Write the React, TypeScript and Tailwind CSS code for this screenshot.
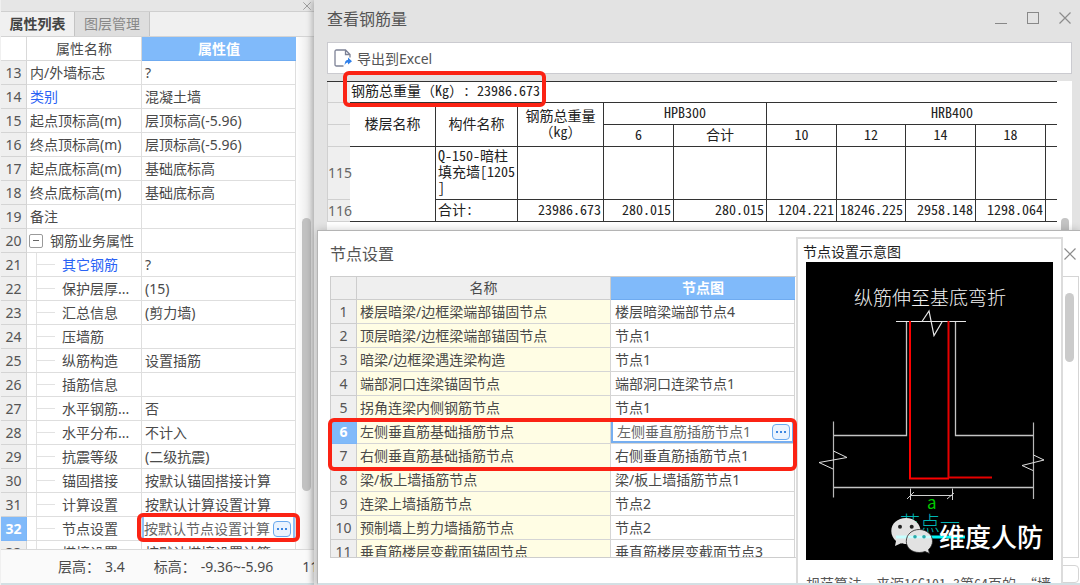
import type { ReactNode } from "react";

const UI = "font-['Noto_Sans','Noto_Sans_CJK_SC',sans-serif]";
const MONO = "font-['Noto_Sans_Mono_CJK_SC','Liberation_Serif','Noto_Sans_CJK_SC',monospace]";

type Property = {
  id: number;
  name: string;
  value?: string;
  kind?: "link" | "group";
  child?: boolean;
};

const properties: Property[] = [
  { id: 13, name: "内/外墙标志", value: "?" },
  { id: 14, name: "类别", value: "混凝土墙", kind: "link" },
  { id: 15, name: "起点顶标高(m)", value: "层顶标高(-5.96)" },
  { id: 16, name: "终点顶标高(m)", value: "层顶标高(-5.96)" },
  { id: 17, name: "起点底标高(m)", value: "基础底标高" },
  { id: 18, name: "终点底标高(m)", value: "基础底标高" },
  { id: 19, name: "备注" },
  { id: 20, name: "钢筋业务属性", kind: "group" },
  { id: 21, name: "其它钢筋", value: "?", kind: "link", child: true },
  { id: 22, name: "保护层厚...", value: "(15)", child: true },
  { id: 23, name: "汇总信息", value: "(剪力墙)", child: true },
  { id: 24, name: "压墙筋", child: true },
  { id: 25, name: "纵筋构造", value: "设置插筋", child: true },
  { id: 26, name: "插筋信息", child: true },
  { id: 27, name: "水平钢筋...", value: "否", child: true },
  { id: 28, name: "水平分布...", value: "不计入", child: true },
  { id: 29, name: "抗震等级", value: "(二级抗震)", child: true },
  { id: 30, name: "锚固搭接", value: "按默认锚固搭接计算", child: true },
  { id: 31, name: "计算设置", value: "按默认计算设置计算", child: true },
  { id: 32, name: "节点设置", value: "按默认节点设置计算", child: true },
  { id: 33, name: "搭接设置", value: "按默认搭接设置计算", child: true },
];

const nodes: [string, string][] = [
  ["楼层暗梁/边框梁端部锚固节点", "楼层暗梁端部节点4"],
  ["顶层暗梁/边框梁端部锚固节点", "节点1"],
  ["暗梁/边框梁遇连梁构造", "节点1"],
  ["端部洞口连梁锚固节点", "端部洞口连梁节点1"],
  ["拐角连梁内侧钢筋节点", "节点1"],
  ["左侧垂直筋基础插筋节点", "左侧垂直筋插筋节点1"],
  ["右侧垂直筋基础插筋节点", "右侧垂直筋插筋节点1"],
  ["梁/板上墙插筋节点", "梁/板上墙插筋节点1"],
  ["连梁上墙插筋节点", "节点2"],
  ["预制墙上剪力墙插筋节点", "节点2"],
  ["垂直筋楼层变截面锚固节点", "垂直筋楼层变截面节点3"],
];

function Highlight({ className }: { className: string }) {
  return (
    <span
      aria-hidden="true"
      className={`pointer-events-none absolute z-10 rounded-md border-4 border-[#fb2314] ${className}`}
    />
  );
}

function MoreButton({ label }: { label: string }) {
  return (
    <button
      type="button"
      aria-label={label}
      className="flex h-4 w-[18px] shrink-0 items-center justify-center gap-0.5 rounded-sm border border-[#6aa9ee] bg-[#eaf3fe]"
    >
      <i className="size-0.5 bg-[#3c86e0]" />
      <i className="size-0.5 bg-[#3c86e0]" />
      <i className="size-0.5 bg-[#3c86e0]" />
    </button>
  );
}

function Cross({ size }: { size: number }) {
  return (
    <svg width={size} height={size} viewBox="0 0 12 12" fill="none" stroke="#8c8c8c" strokeWidth="1.2">
      <path d="M0.5 0.5 11.5 11.5M11.5 0.5 0.5 11.5" />
    </svg>
  );
}

function PropertyRow({ row }: { row: Property }) {
  const selected = row.id === 32;
  return (
    <tr className="h-6">
      <th
        scope="row"
        className={
          selected
            ? "border-r border-b border-[#7cb5f7] bg-[#80bafa] p-0 text-center font-bold text-white"
            : "border-r border-b border-[#d4d4d4] bg-[#efefef] p-0 text-center font-normal text-[#555]"
        }
      >
        {row.id}
      </th>
      <td className="border-r border-b border-[#dedede] p-0">
        {row.kind === "group" ? (
          <div className="flex items-center gap-[7px] pl-0.5">
            <button
              type="button"
              aria-label="折叠钢筋业务属性"
              className="flex size-[14px] items-center justify-center rounded-xs border border-[#9a9a9a] bg-white"
            >
              <i className="h-px w-1.5 bg-[#666]" />
            </button>
            <span>{row.name}</span>
          </div>
        ) : row.child ? (
          <div className="flex h-[23px] items-center pl-[9px]">
            <i className="h-[23px] w-px bg-[#e2e2e2]" />
            <i className="mr-[7px] h-px w-[18px] bg-[#e2e2e2]" />
            <span className={row.kind === "link" ? "text-[#2a62f5]" : ""}>{row.name}</span>
          </div>
        ) : (
          <span className={row.kind === "link" ? "pl-[3px] text-[#2a62f5]" : "pl-[3px]"}>{row.name}</span>
        )}
      </td>
      <td className="relative border-r border-b border-[#dedede] p-0">
        {selected ? (
          <div className="flex h-[23px] items-center border-x-2 border-[#8fc0f7] pr-0.5">
            <input
              aria-label="节点设置"
              defaultValue={row.value}
              className="min-w-0 flex-1 bg-transparent text-[#666] outline-none"
            />
            <MoreButton label="编辑节点设置" />
            <Highlight className="-inset-x-[5px] -top-1 -bottom-0.5" />
          </div>
        ) : (
          <span className="pl-[3px]">{row.value}</span>
        )}
      </td>
    </tr>
  );
}

function PropertyPanel() {
  return (
    <aside className="flex w-[314px] shrink-0 flex-col bg-[#f0f0f0] pl-px">
      <div className="flex h-3 shrink-0 items-center justify-end border-b border-[#cfcfcf] bg-[#e6e6e6] pr-[3px]">
        <button type="button" aria-label="关闭面板">
          <Cross size={8} />
        </button>
      </div>
      <div role="tablist" className="flex h-[25px] shrink-0 border-b border-[#d4d4d4]">
        <button
          type="button"
          role="tab"
          aria-selected="true"
          className="w-[74px] border-r border-[#c4c4c4] bg-[#f0f0f0] font-bold text-[#444]"
        >
          属性列表
        </button>
        <button
          type="button"
          role="tab"
          aria-selected="false"
          className="w-[75px] border-r border-[#c4c4c4] bg-[#dedede] text-[#888]"
        >
          图层管理
        </button>
      </div>
      <div className="flex min-h-0 flex-1 overflow-hidden bg-white">
        <div className="w-[295px]">
          <table className="w-full table-fixed border-separate border-spacing-0">
            <colgroup>
              <col className="w-[26px]" />
              <col className="w-[115px]" />
              <col />
            </colgroup>
            <thead>
              <tr className="h-6">
                <th className="border-r border-b border-[#d9d9d9] p-0" />
                <th className="border-r border-b border-[#d9d9d9] p-0 text-center font-normal">属性名称</th>
                <th className="border-b border-[#6fabf0] bg-[#80bafa] p-0 text-center font-bold text-white">
                  属性值
                </th>
              </tr>
            </thead>
            <tbody>
              {properties.map((row) => (
                <PropertyRow key={row.id} row={row} />
              ))}
            </tbody>
          </table>
        </div>
        <div className="flex-1 bg-linear-to-r from-white to-[#e4e4e4] pl-1.5">
          <div className="mt-[181px] h-[273px] w-[9px] rounded-full bg-[#c1c1c1]" />
        </div>
      </div>
      <footer className="flex h-9 shrink-0 items-center gap-[29px] overflow-hidden border-t border-b-2 border-t-[#d9d9d9] border-b-[#d3e0e4] bg-[#fafafa] pl-[57px] whitespace-nowrap">
        <span className="flex gap-[5px]">
          <span>层高：</span>
          <span>3.4</span>
        </span>
        <span className="flex gap-[5px]">
          <span>标高：</span>
          <span>-9.36~-5.96</span>
        </span>
        <span>11</span>
      </footer>
    </aside>
  );
}

function Gutter({ children }: { children?: ReactNode }) {
  return (
    <th
      scope="row"
      className={`border-b border-l border-[#d0d0d0] bg-[#efefef] p-0 text-center font-normal text-[#666] ${UI}`}
    >
      {children}
    </th>
  );
}

const cell = "border-r border-b border-[#333] p-0 pb-1";
const edge = "border-b border-[#333] p-0";

function RebarTable() {
  return (
    <table
      className={`w-[730px] table-fixed border-separate border-spacing-0 border-t border-[#333] leading-4 text-[#222] ${MONO}`}
    >
      <colgroup>
        <col className="w-[23px]" />
        <col className="w-[86px]" />
        <col className="w-[82px]" />
        <col className="w-[86px]" />
        <col className="w-[70px]" />
        <col className="w-[93px]" />
        <col className="w-[70px]" />
        <col className="w-[69px]" />
        <col className="w-[70px]" />
        <col className="w-[70px]" />
        <col />
      </colgroup>
      <tbody>
        <tr className="h-[21px]">
          <Gutter />
          <td colSpan={10} className="border-b border-[#333] p-0 pb-1 pl-px">
            钢筋总重量（Kg）: 23986.673
          </td>
        </tr>
        <tr className="h-[22px] text-center">
          <Gutter />
          <td rowSpan={2} className={cell}>楼层名称</td>
          <td rowSpan={2} className={cell}>构件名称</td>
          <td rowSpan={2} className={cell}>钢筋总重量<br />（kg）</td>
          <td colSpan={2} className={cell}>HPB300</td>
          <td colSpan={5} className="border-b border-[#333] p-0 pb-1 pl-20">HRB400</td>
        </tr>
        <tr className="h-[22px] text-center">
          <Gutter />
          <td className={cell}>6</td>
          <td className={cell}>合计</td>
          <td className={cell}>10</td>
          <td className={cell}>12</td>
          <td className={cell}>14</td>
          <td className={cell}>18</td>
          <td className={edge} />
        </tr>
        <tr className="h-[53px]">
          <Gutter>115</Gutter>
          <td rowSpan={2} className={cell} />
          <td className={cell}>
            <div className="pl-0.5">Q-150-暗柱<br />填充墙[1205<br />]</div>
          </td>
          <td className={cell} />
          <td className={cell} />
          <td className={cell} />
          <td className={cell} />
          <td className={cell} />
          <td className={cell} />
          <td className={cell} />
          <td className={edge} />
        </tr>
        <tr className="h-[22px] text-right">
          <Gutter>116</Gutter>
          <td className={`${cell} text-left`}>
            <div className="pl-0.5">合计:</div>
          </td>
          <td className={cell}><div className="pr-0.5">23986.673</div></td>
          <td className={cell}><div className="pr-0.5">280.015</div></td>
          <td className={cell}><div className="pr-0.5">280.015</div></td>
          <td className={cell}><div className="pr-0.5">1204.221</div></td>
          <td className={cell}><div className="pr-0.5">18246.225</div></td>
          <td className={cell}><div className="pr-0.5">2958.148</div></td>
          <td className={cell}><div className="pr-0.5">1298.064</div></td>
          <td className={edge} />
        </tr>
      </tbody>
    </table>
  );
}

function Diagram() {
  return (
    <svg
      width="247"
      height="298"
      viewBox="0 0 247 298"
      fill="none"
      role="img"
      aria-label="纵筋伸至基底弯折"
      className="bg-black font-['Noto_Sans_CJK_SC',sans-serif]"
    >
      <text x="48" y="43" fontSize="19" fontWeight="300" fill="#f2f2f2">纵筋伸至基底弯折</text>
      <path d="M90 59.500H160M116 59.500 123 49 128 73.500 136 60" stroke="#e8e8e8" strokeWidth="1.2" />
      <path d="M100.500 60V173.500H27M149.500 60V173.500H227M27 225.500H227" stroke="#c4c4c4" strokeWidth="1.3" />
      <path d="M27.500 159.500V235.500M227.500 160.500V237" stroke="#b8b8b8" strokeWidth="1.2" />
      <path d="M27.500 189 41 195.500 13 200.500 27 207M227.500 193 238 198 216 203.500 227 208.500" stroke="#e0e0e0" />
      <path d="M104 59V216.500H143" stroke="#fe0000" strokeWidth="2" />
      <path d="M142.500 59V215.500H186" stroke="#e60000" strokeWidth="2" />
      <path d="M104.500 226.500V238M146.500 226.500V238M104.500 233.500H146.500M101 237 108 230M141 237 148 231" stroke="#cfcfcf" />
      <text x="121" y="247" fontSize="17" fill="#00c800">a</text>
      <text x="94" y="269" fontSize="20" fontWeight="300" fill="#00b4b4">节点一</text>
      <path d="M90 275H159" stroke="#00f5f5" strokeWidth="3" />
      <path
        d="M100 256C91.500 256 85.300 261.500 85.300 269C85.300 273 87.200 276.500 90 279L89 284 95 281.200C97 281.800 98.500 282 100 282C108.500 282 114.500 276 114.500 269S108.500 256 100 256Z"
        fill="#e2e2e2"
      />
      <path d="M90 275H106" stroke="#c8ffff" strokeWidth="3" />
      <path
        d="M113.300 267.500C106 267.500 100.300 272.500 100.300 279.300S106 290.500 113.300 290.500C115.500 290.500 117 290.200 119 289.500L123.500 291.500 122.500 287.500C125 285.500 126.500 282.500 126.500 279.300C126.500 272.500 120.500 267.500 113.300 267.500Z"
        fill="#e2e2e2"
        stroke="#222"
        strokeWidth="0.8"
      />
      <path d="M102 275H125" stroke="#c8ffff" strokeWidth="2.500" />
      <circle cx="94" cy="264.800" r="2" fill="#222" />
      <circle cx="105.700" cy="264.800" r="2" fill="#222" />
      <circle cx="109" cy="274.700" r="1.800" fill="#2aa9a9" />
      <circle cx="118" cy="274.700" r="1.800" fill="#2aa9a9" />
      <text x="133" y="285" fontSize="26" fontWeight="500" fill="#fff">维度人防</text>
    </svg>
  );
}

function NodeTable() {
  return (
    <div className="relative w-[465px]">
      <div className="h-[282px] overflow-hidden border-y border-l border-[#cdcdcd]">
        <table className="w-full table-fixed border-separate border-spacing-0">
          <colgroup>
            <col className="w-[26px]" />
            <col className="w-[254px]" />
            <col />
          </colgroup>
          <thead>
            <tr className="h-[23px] bg-[#efefef]">
              <th className="border-r border-b border-[#cdcdcd] p-0" />
              <th className="border-r border-b border-[#cdcdcd] p-0 text-center font-normal">名称</th>
              <th className="border-b border-[#6fabf0] bg-[#80bafa] p-0 text-center font-bold text-white">
                节点图
              </th>
            </tr>
          </thead>
          <tbody>
            {nodes.map(([name, value], i) => {
              const selected = i === 5;
              return (
                <tr key={name} className="h-6">
                  <th
                    scope="row"
                    className={
                      selected
                        ? "border-r border-b border-[#7cb5f7] bg-[#80bafa] p-0 text-center font-bold text-white"
                        : "border-r border-b border-[#cdcdcd] bg-[#efefef] p-0 text-center font-normal text-[#555]"
                    }
                  >
                    {i + 1}
                  </th>
                  <td className="border-r border-b border-[#d5d5d5] bg-[#fffde4] p-0 pl-[3px]">{name}</td>
                  <td className="border-r border-b border-[#d5d5d5] bg-white p-0">
                    {selected ? (
                      <div className="flex h-[23px] items-center border-2 border-[#76aef0] pr-0.5 pl-1">
                        <input
                          aria-label={name}
                          defaultValue={value}
                          className="h-[19px] min-w-0 flex-1 bg-transparent text-[#666] outline-none"
                        />
                        <MoreButton label="选择节点图" />
                      </div>
                    ) : (
                      <span className="pl-1">{value}</span>
                    )}
                  </td>
                </tr>
              );
            })}
          </tbody>
        </table>
      </div>
      <Highlight className="top-[142px] -right-0.5 -left-0.5 h-[53px]" />
    </div>
  );
}

function NodeDialog() {
  return (
    <section
      aria-label="节点设置"
      className="absolute top-[230px] right-0 bottom-0 left-[3px] flex flex-col overflow-hidden border-t border-b-2 border-l border-t-[#b4b4b4] border-b-[#d3e0e4] border-l-[#b4b4b4] bg-white shadow-[0_0_8px_rgba(0,0,0,0.2)]"
    >
      <header className="flex h-[45px] shrink-0 items-center justify-between pr-1 pl-3">
        <h2 className="text-base text-[#555]">节点设置</h2>
        <button type="button" aria-label="关闭节点设置">
          <Cross size={12} />
        </button>
      </header>
      <div className="mr-px ml-3 flex shrink-0 justify-between border-y border-r border-[#d5d5d5]">
        <div className="-my-px">
          <NodeTable />
        </div>
        <div className="pr-1">
          <div className="mt-4 h-[69px] w-[9px] rounded-full bg-[#cbcbcb]" />
        </div>
      </div>
      <div className="mt-[7px] mr-px ml-[480px] h-10 rounded-sm border border-[#d5d5d5]" />
      <figure className="absolute top-1.5 right-[17px] flex h-[400px] w-[267px] flex-col border-2 border-[#dcdcdc] bg-white pr-1.5 pl-2">
        <figcaption className="-ml-[3px] flex h-[23px] items-end text-[#222]">节点设置示意图</figcaption>
        <Diagram />
        <p className={`mt-[13px] whitespace-nowrap text-[#555] ${MONO}`}>规范算法，来源16G101-3第64页的 “墙</p>
      </figure>
    </section>
  );
}

function RebarWindow() {
  return (
    <main className="relative min-w-0 flex-1 bg-[#e3e3e3] pr-2 pl-[13px] shadow-[-2px_0_6px_rgba(0,0,0,0.25)]">
      <header className="flex h-[42px] items-center justify-between pr-px">
        <h1 className="pb-1 text-base text-[#555]">查看钢筋量</h1>
        <div className="flex items-center gap-5 pb-1.5">
          <button type="button" aria-label="最小化" className="flex size-3 items-end">
            <i className="h-px w-full bg-[#888]" />
          </button>
          <button type="button" aria-label="最大化" className="size-3 border border-[#888]" />
          <button type="button" aria-label="关闭">
            <Cross size={12} />
          </button>
        </div>
      </header>
      <div className="flex h-8 items-center border border-[#cbcbd0] bg-white pl-1.5">
        <button type="button" className="flex items-center gap-[5px] text-[#555]">
          <svg width="18" height="18" viewBox="0 0 18 18" fill="none">
            <path
              d="M9.500 17H2.500Q1 17 1 15.500V2.500Q1 1 2.500 1H11.500L16 5.500V8.500M11.500 1.500V5.500H16"
              stroke="#7d8296"
              strokeWidth="1.300"
            />
            <path d="M14 8.500 18 12.200 14 15.600V13.600C12.400 13.600 11.400 14.400 10.700 16.500C10.500 13 11.800 10.800 14 10.700Z" fill="#2f80ea" />
          </svg>
          <span className="pt-0.5">导出到Excel</span>
        </button>
      </div>
      <div className="relative mt-[7px]">
        <div className="h-40 overflow-hidden bg-white">
          <RebarTable />
          <div className="flex justify-end pr-[3px]">
            <div className="-mt-1 h-6 w-2 rounded-t-full bg-[#c4c4c4]" />
          </div>
        </div>
        <Highlight className="-top-2.5 left-4 h-9 w-[203px]" />
      </div>
      <NodeDialog />
    </main>
  );
}

export default function App() {
  return (
    <div className={`flex h-screen overflow-hidden text-sm leading-5 text-[#4a4a4a] ${UI}`}>
      <PropertyPanel />
      <RebarWindow />
    </div>
  );
}
